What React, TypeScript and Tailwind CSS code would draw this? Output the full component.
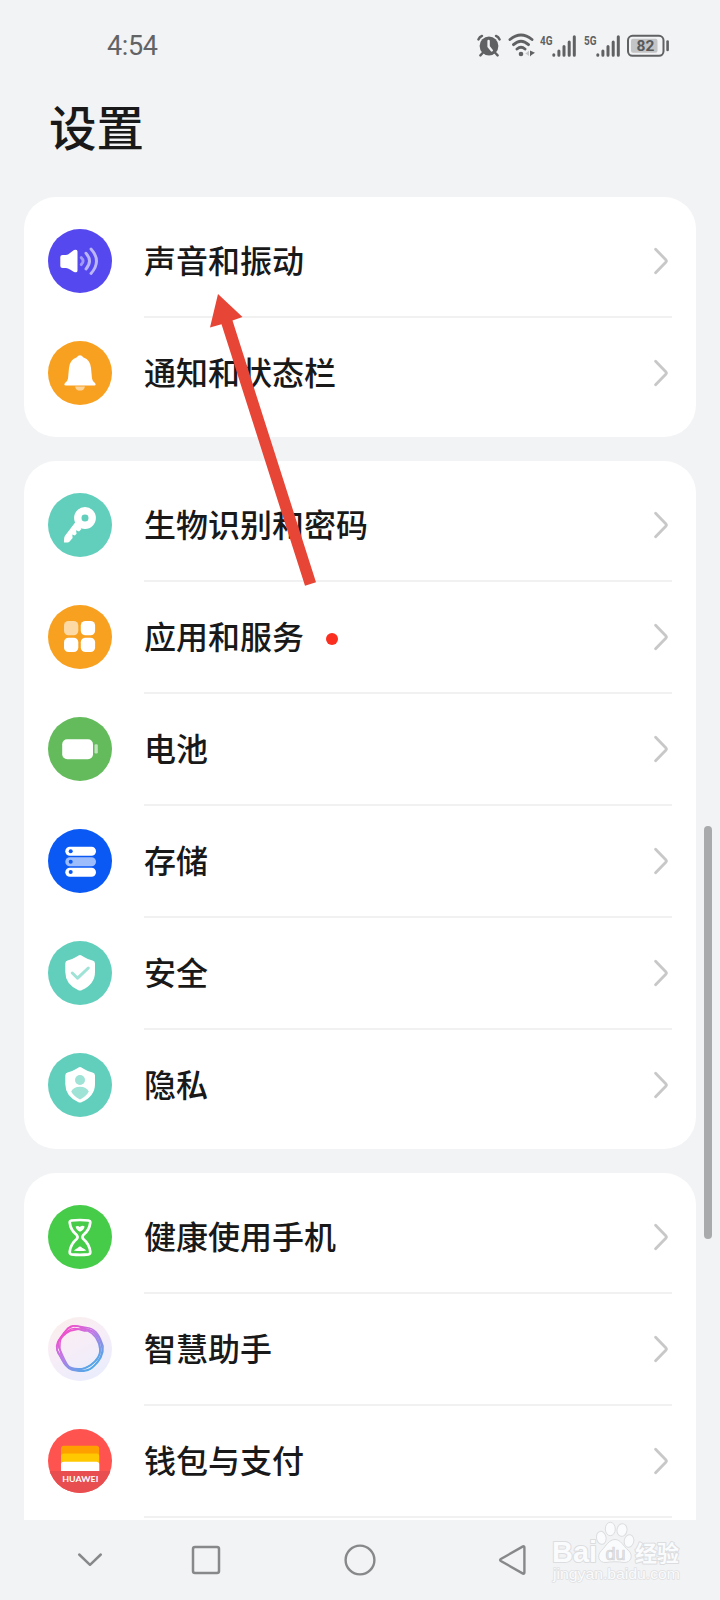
import React from "react";

type Row = { label: string; icon: React.ReactNode; bg: string; dot?: boolean };

const SHIELD = "M32 14 Q33 14 36 16 Q40 18.5 44.5 19.6 Q47 20.2 47 22.5 V31 Q47 43 34 49 Q32 50 30 49 Q17.3 43 17.3 31 V22.5 Q17.3 20.2 19.5 19.6 Q24 18.5 28 16 Q31 14 32 14Z";

const soundIcon = (
  <>
    <path d="M14.5 26 H18 Q20 25.8 22 24 L26 21 Q29.5 19.8 29.5 22.5 V41.5 Q29.5 44.2 26 43 L22 40.5 Q20 39 18 39 H14.5 Q12.3 39 12.3 37 V28 Q12.3 26 14.5 26Z" fill="#fff" />
    <g fill="none" stroke="#fff" strokeWidth="2.9" strokeLinecap="round">
      <path d="M33.2 28.6 Q37 32 33.2 35.6" opacity=".45" />
      <path d="M38 24.2 Q45 32 38 40" opacity=".6" />
      <path d="M43 20 Q54 32 43 44.5" opacity=".6" />
    </g>
  </>
);

const bellIcon = (
  <>
    <path d="M27 45.4 H37 Q36 49.6 32 49.6 Q28 49.6 27 45.4Z" fill="#fff" opacity=".55" />
    <path d="M28.5 16.5 Q32 12.2 35.5 16.5 Q42.5 19 43 27 L44 37.5 Q44.3 40 47 42 Q48.5 44.4 46.5 44.4 H17.5 Q15.5 44.4 17 42 Q19.7 40 20 37.5 L21 27 Q21.5 19 28.5 16.5Z" fill="#fff" />
  </>
);

const keyIcon = (
  <>
    <circle cx="37" cy="25" r="7.2" fill="none" stroke="#fff" strokeWidth="7.4" />
    <path d="M27.5 29 L33.5 36 L31 38.5 L28 37.2 L28.6 40.8 L26.8 42.4 L24.3 41.5 L24.6 45 L21.6 48.6 Q20.8 49.6 19.5 49.6 H16.8 Q15.8 49.6 15.9 48.4 L16.2 45 Q16.3 43.6 17.2 42.5Z" fill="#fff" />
  </>
);

const appsIcon = (
  <g fill="#fff">
    <rect x="16" y="16" width="14.3" height="14.3" rx="4.5" opacity=".6" />
    <rect x="32.8" y="16" width="14.3" height="14.3" rx="4.5" />
    <rect x="16" y="32.8" width="14.3" height="14.3" rx="4.5" />
    <rect x="32.8" y="32.8" width="14.3" height="14.3" rx="4.5" />
  </g>
);

const batteryIcon = (
  <g fill="#fff">
    <rect x="14.2" y="22.2" width="30.8" height="20" rx="5" />
    <rect x="46.5" y="27.3" width="3.3" height="9.2" rx="1.2" opacity=".6" />
  </g>
);

const storageIcon = (
  <>
    <rect x="17.3" y="17.7" width="30.7" height="9" rx="4.5" fill="#fff" />
    <rect x="17.3" y="28.2" width="30.7" height="9" rx="4.5" fill="#fff" opacity=".6" />
    <rect x="17.3" y="38.7" width="30.7" height="9" rx="4.5" fill="#fff" />
    <g fill="#0b59f5">
      <circle cx="22.7" cy="22.3" r="2" />
      <circle cx="22.7" cy="32.7" r="2" />
      <circle cx="22.7" cy="43.1" r="2" />
    </g>
  </>
);

const securityIcon = (
  <>
    <path d={SHIELD} fill="#fff" />
    <path d="M24.3 32 L29.6 37.2 L40.3 27" fill="none" stroke="#9fe2d6" strokeWidth="3" strokeLinecap="round" strokeLinejoin="round" />
  </>
);

const privacyIcon = (
  <>
    <path d={SHIELD} fill="#fff" />
    <circle cx="32" cy="27" r="5" fill="#9fe2d6" />
    <path d="M32 33.8 Q38.5 33.8 40.8 38.5 Q38.5 43 32 46.6 Q25.5 43 23.2 38.5 Q25.5 33.8 32 33.8Z" fill="#9fe2d6" />
  </>
);

const hourglassIcon = (
  <>
    <path d="M23.5 15.5 Q32 14.5 40.5 15.5 Q42.3 15.8 42.3 17.5 Q41.5 25 35.3 30 Q33.6 32 35.3 34 Q41.5 39 42.3 47 Q42.3 49 40.5 49.3 Q32 50.3 23.5 49.3 Q21.7 49 21.7 47 Q22.5 39 28.7 34 Q30.4 32 28.7 30 Q22.5 25 21.7 17.5 Q21.7 15.8 23.5 15.5Z" fill="none" stroke="#fff" strokeWidth="2.7" />
    <path d="M27.6 21.6 Q30 20.2 31.8 22 Q34.5 19.6 36.6 21.6 Q36.2 25 32 26.8 Q28 25 27.6 21.6Z" fill="#fff" />
    <path d="M25.8 45.5 Q28 43.6 30 42.7 Q32 40.5 34 42.7 Q36.5 43.6 38.4 45.5 Q32 46.6 25.8 45.5Z" fill="#fff" />
  </>
);

const assistantIcon = (
  <>
    <defs>
      <linearGradient id="halo" x1="0" y1="0" x2=".6" y2="1">
        <stop offset="0" stopColor="#fbefe9" />
        <stop offset=".5" stopColor="#f7edf7" />
        <stop offset="1" stopColor="#ebedfc" />
      </linearGradient>
      <linearGradient id="ring" x1=".15" y1=".1" x2=".8" y2=".9">
        <stop offset="0" stopColor="#ee35c4" />
        <stop offset=".4" stopColor="#b765e4" />
        <stop offset="1" stopColor="#389de5" />
      </linearGradient>
    </defs>
    <circle cx="32" cy="32" r="32" fill="url(#halo)" />
    <g fill="none" stroke="url(#ring)" strokeWidth="1.6" opacity=".85">
      <path d="M20 11 C26 6 34 11 41 11 C49 13 52 20 55 29 C56 38 50 46 44 51 C38 56 31 54 24 53 C16 50 15 43 10 36 C6 27 14 18 20 11Z" />
      <path d="M25 9 C32 8 37 13 44 14 C50 17 53 24 54 31 C55 40 48 48 42 52 C34 55 28 54 21 51 C14 46 13 39 9 33 C7 24 14 20 17 15 C20 11 22 10 25 9Z" />
      <path d="M22 14 C30 12 38 10 45 15 C51 21 53 28 52 36 C49 44 44 48 37 51 C29 53 23 52 18 47 C13 40 11 33 12 26 C12 20 16 17 22 14Z" />
      <path d="M20 14 C27 8 34 15 40 14 C47 17 51 24 52 33 C52 41 48 44 43 48 C35 53 28 54 22 51 C17 46 15 38 11 31 C8 23 15 19 20 14Z" />
    </g>
  </>
);

const walletIcon = (
  <>
    <defs>
      <clipPath id="disc"><circle cx="32" cy="32" r="32" /></clipPath>
    </defs>
    <rect y="42" width="64" height="22" fill="#e84d4f" clipPath="url(#disc)" />
    <path d="M13 42 V19.5 Q13 16.7 15.8 16.7 H48.4 Q51.2 16.7 51.2 19.5 V42Z" fill="#ff9f00" />
    <path d="M13 42 V27 Q13 24.4 15.8 24.4 H48.4 Q51.2 24.4 51.2 27 V42Z" fill="#ffc800" />
    <path d="M13 42 V35.4 Q13 32.7 15.8 32.7 H48.4 Q51.2 32.7 51.2 35.4 V42Z" fill="#fff" />
    <text x="32.3" y="53.3" fontSize="7.8" fontWeight="700" textAnchor="middle" textLength="36" lengthAdjust="spacingAndGlyphs" fill="#fff" fontFamily="Lato, sans-serif">HUAWEI</text>
  </>
);

const groups: Row[][] = [
  [
    { label: "声音和振动", icon: soundIcon, bg: "bg-[#5548ef]" },
    { label: "通知和状态栏", icon: bellIcon, bg: "bg-[#f8a120]" },
  ],
  [
    { label: "生物识别和密码", icon: keyIcon, bg: "bg-[#62cfbd]" },
    { label: "应用和服务", icon: appsIcon, bg: "bg-[#f8a120]", dot: true },
    { label: "电池", icon: batteryIcon, bg: "bg-[#64bb5c]" },
    { label: "存储", icon: storageIcon, bg: "bg-[#0b59f5]" },
    { label: "安全", icon: securityIcon, bg: "bg-[#62cfbd]" },
    { label: "隐私", icon: privacyIcon, bg: "bg-[#62cfbd]" },
  ],
  [
    { label: "健康使用手机", icon: hourglassIcon, bg: "bg-[#46cc49]" },
    { label: "智慧助手", icon: assistantIcon, bg: "bg-transparent" },
    { label: "钱包与支付", icon: walletIcon, bg: "bg-[#ff5350]" },
    { label: "", icon: null, bg: "bg-transparent" },
  ],
];

function SettingRow({ row, first }: { row: Row; first: boolean }) {
  return (
    <li className="flex h-[112px] items-center pl-6">
      <div className={`mt-[1.4px] size-16 shrink-0 rounded-full ${row.bg}`}>
        <svg viewBox="0 0 64 64" className="size-16">{row.icon}</svg>
      </div>
      <div className={`mr-6 ml-8 flex h-full flex-1 items-center border-t-2 ${first ? "border-transparent" : "border-[#f1f1f2]"}`}>
        <span className="pb-[5px] text-[32px] leading-[48px] font-medium text-[#191919]">{row.label}</span>
        {row.dot && <span className="mt-[3px] ml-[21.5px] size-3 rounded-full bg-[#fa2f20]" />}
        <svg viewBox="0 0 14 28" className="mr-1 mb-px ml-auto h-7 w-3.5" fill="none" stroke="#c8c8c9" strokeWidth="2.8" strokeLinecap="round" strokeLinejoin="round">
          <path d="M1.6 2.2 L12 13 Q12.8 14 12 15 L1.6 25.8" />
        </svg>
      </div>
    </li>
  );
}

function Signal({ label }: { label: string }) {
  return (
    <svg viewBox="0 0 38 26" className="h-[26px] w-[38px]">
      <text x="0" y="11.8" fontSize="13.5" fontWeight="700" textLength="12.5" lengthAdjust="spacingAndGlyphs" fill="#606163" fontFamily="Roboto, sans-serif">{label}</text>
      <g stroke="#606163" strokeWidth="3" strokeLinecap="round">
        <path d="M13.8 21.8V22.3M18.9 18V22.3M24 13.5V22.3M29.2 9V22.3M34.3 3.8V22.3" />
      </g>
    </svg>
  );
}

function StatusBar() {
  return (
    <div className="flex h-[90px] items-center pr-[50px] pl-[107px] text-[#626365]">
      <span className="pt-[3px] font-[Roboto,sans-serif] text-[27px] tracking-[-0.4px]">4:54</span>
      <div className="ml-auto flex items-center pt-px">
        <svg viewBox="0 0 24 26" className="h-[26px] w-6" fill="none" stroke="#606163" strokeWidth="2.4" strokeLinecap="round">
          <circle cx="12" cy="13" r="9.4" fill="#606163" stroke="none" />
          <path d="M1.4 6.4 Q2.5 3.9 5 2.9M22.6 6.4 Q21.5 3.9 19 2.9M5.6 20 L3.4 22.4M18.4 20 L20.6 22.4" />
          <path d="M11.6 8 V13.6 L14.8 17.4" stroke="#f2f3f5" />
        </svg>
        <svg viewBox="0 0 28 26" className="ml-[7px] h-[26px] w-7" fill="none" stroke="#606163" strokeWidth="2.9" strokeLinecap="round">
          <path d="M2 6.5 Q13 -2.5 24 6.5M5.5 11.6 Q13 4.8 20.5 11.6M9 16 Q13 12.5 17 16" />
          <circle cx="13" cy="21" r="2.3" fill="#606163" stroke="none" />
          <path d="M22 17.5 V23.5 L23.5 22 L27 19.8Z" fill="#606163" stroke="none" />
          <path d="M17.4 20.4 L21 17.8 V23Z" fill="#c5c6c8" stroke="none" />
        </svg>
        <div className="ml-[4px]"><Signal label="4G" /></div>
        <div className="ml-[6px]"><Signal label="5G" /></div>
        <svg viewBox="0 0 44 26" className="ml-[4px] h-[26px] w-11">
          <rect x="2" y="2.8" width="35.5" height="20" rx="4.5" fill="none" stroke="#606163" strokeWidth="2" />
          <rect x="5" y="5.8" width="26.5" height="14" rx="2" fill="#c3c4c6" />
          <rect x="40.3" y="7.3" width="2.6" height="11" rx="1.3" fill="#606163" />
          <text x="19.4" y="18.4" fontSize="15.5" fontWeight="700" textAnchor="middle" fill="#58595b" fontFamily="Roboto, sans-serif">82</text>
        </svg>
      </div>
    </div>
  );
}

function NavBar() {
  return (
    <nav className="relative flex h-20 shrink-0 items-center bg-[#f2f3f5] pl-[74px]">
      <svg viewBox="0 0 32 32" className="size-8" fill="none" stroke="#87888a" strokeWidth="2.5" strokeLinecap="round" strokeLinejoin="round">
        <path d="M5.2 10.5 L16 20.8 L26.8 10.5" />
      </svg>
      <svg viewBox="0 0 32 32" className="ml-[84px] size-8" fill="none" stroke="#87888a" strokeWidth="2.5">
        <rect x="3" y="3" width="26" height="26" rx="2" />
      </svg>
      <svg viewBox="0 0 32 32" className="ml-[122px] size-8" fill="none" stroke="#87888a" strokeWidth="2.4">
        <circle cx="16" cy="16" r="14.4" />
      </svg>
      <svg viewBox="0 0 32 32" className="ml-[122px] size-8" fill="none" stroke="#87888a" strokeWidth="2.4" strokeLinejoin="round">
        <path d="M2.8 15 Q1.4 16 2.8 17 L25 29.6 Q26.4 30 26.4 28.6 V3.4 Q26.4 2 25 2.4Z" />
      </svg>
      <svg viewBox="0 0 136 68" className="absolute top-0 left-[548px] h-[68px] w-[136px]" fill="#fafbfc" stroke="#dcdddf" strokeWidth="1" strokeLinejoin="round">
        <g strokeWidth="2" paintOrder="stroke">
          <text x="4" y="42" fontSize="29" fontWeight="700" textLength="45" lengthAdjust="spacingAndGlyphs" fontFamily="Liberation Sans, sans-serif">Bai</text>
          <text x="87" y="40.5" fontSize="22" fontWeight="700" textLength="44" lengthAdjust="spacingAndGlyphs" fontFamily="Noto Sans CJK SC, sans-serif">经验</text>
          <text x="5" y="59" fontSize="14.5" strokeWidth="1.4" stroke="#dfe0e2" textLength="127" lengthAdjust="spacingAndGlyphs" fontFamily="Liberation Sans, sans-serif">jingyan.baidu.com</text>
        </g>
        <ellipse cx="53.3" cy="17.8" rx="4.8" ry="6.5" transform="rotate(-12 53.3 17.8)" />
        <ellipse cx="62.3" cy="9" rx="5" ry="6.7" />
        <ellipse cx="74" cy="10" rx="5" ry="6.4" transform="rotate(10 74 10)" />
        <ellipse cx="81" cy="21" rx="4.8" ry="6.3" transform="rotate(12 81 21)" />
        <path d="M67 19.5 C73 19.5 75 26 80 30 C86 35 83 43 76 42.5 C70 41.5 64 41.5 58 42.5 C51 43 48 36 53.5 30.5 C58 26 61 19.5 67 19.5Z" />
        <text x="67.5" y="39.5" fontSize="18" fontWeight="400" textAnchor="middle" fill="#e4e5e7" stroke="#d3d4d6" strokeWidth=".7" fontFamily="Liberation Sans, sans-serif">du</text>
      </svg>
    </nav>
  );
}

export default function App() {
  return (
    <div className="relative flex h-[1600px] w-[720px] flex-col overflow-hidden bg-[#f2f3f5] font-['Noto_Sans_CJK_SC',sans-serif]">
      <StatusBar />
      <h1 className="h-[107px] shrink-0 pt-px pl-[49px] text-[47.5px] leading-[70px] font-medium text-[#191919]">设置</h1>
      <main className="flex min-h-0 flex-1 flex-col gap-6 overflow-hidden px-6">
        {groups.map((rows, i) => (
          <ul key={i} className="shrink-0 rounded-[32px] bg-white pt-[7px] pb-[9px]">
            {rows.map((row, j) => <SettingRow key={j} row={row} first={j === 0} />)}
          </ul>
        ))}
      </main>
      <NavBar />
      <div className="absolute top-[826px] left-[704px] h-[413px] w-2 rounded-full bg-[#a9aaac]" />
      <svg viewBox="0 0 120 300" className="absolute top-[290px] left-[200px] h-[300px] w-[120px]">
        <path d="M18 4 L42.5 27 L32.5 30.5 L116 292.2 L105 295.8 L21.5 34.3 L10 37.5Z" fill="#e74536" />
      </svg>
    </div>
  );
}
